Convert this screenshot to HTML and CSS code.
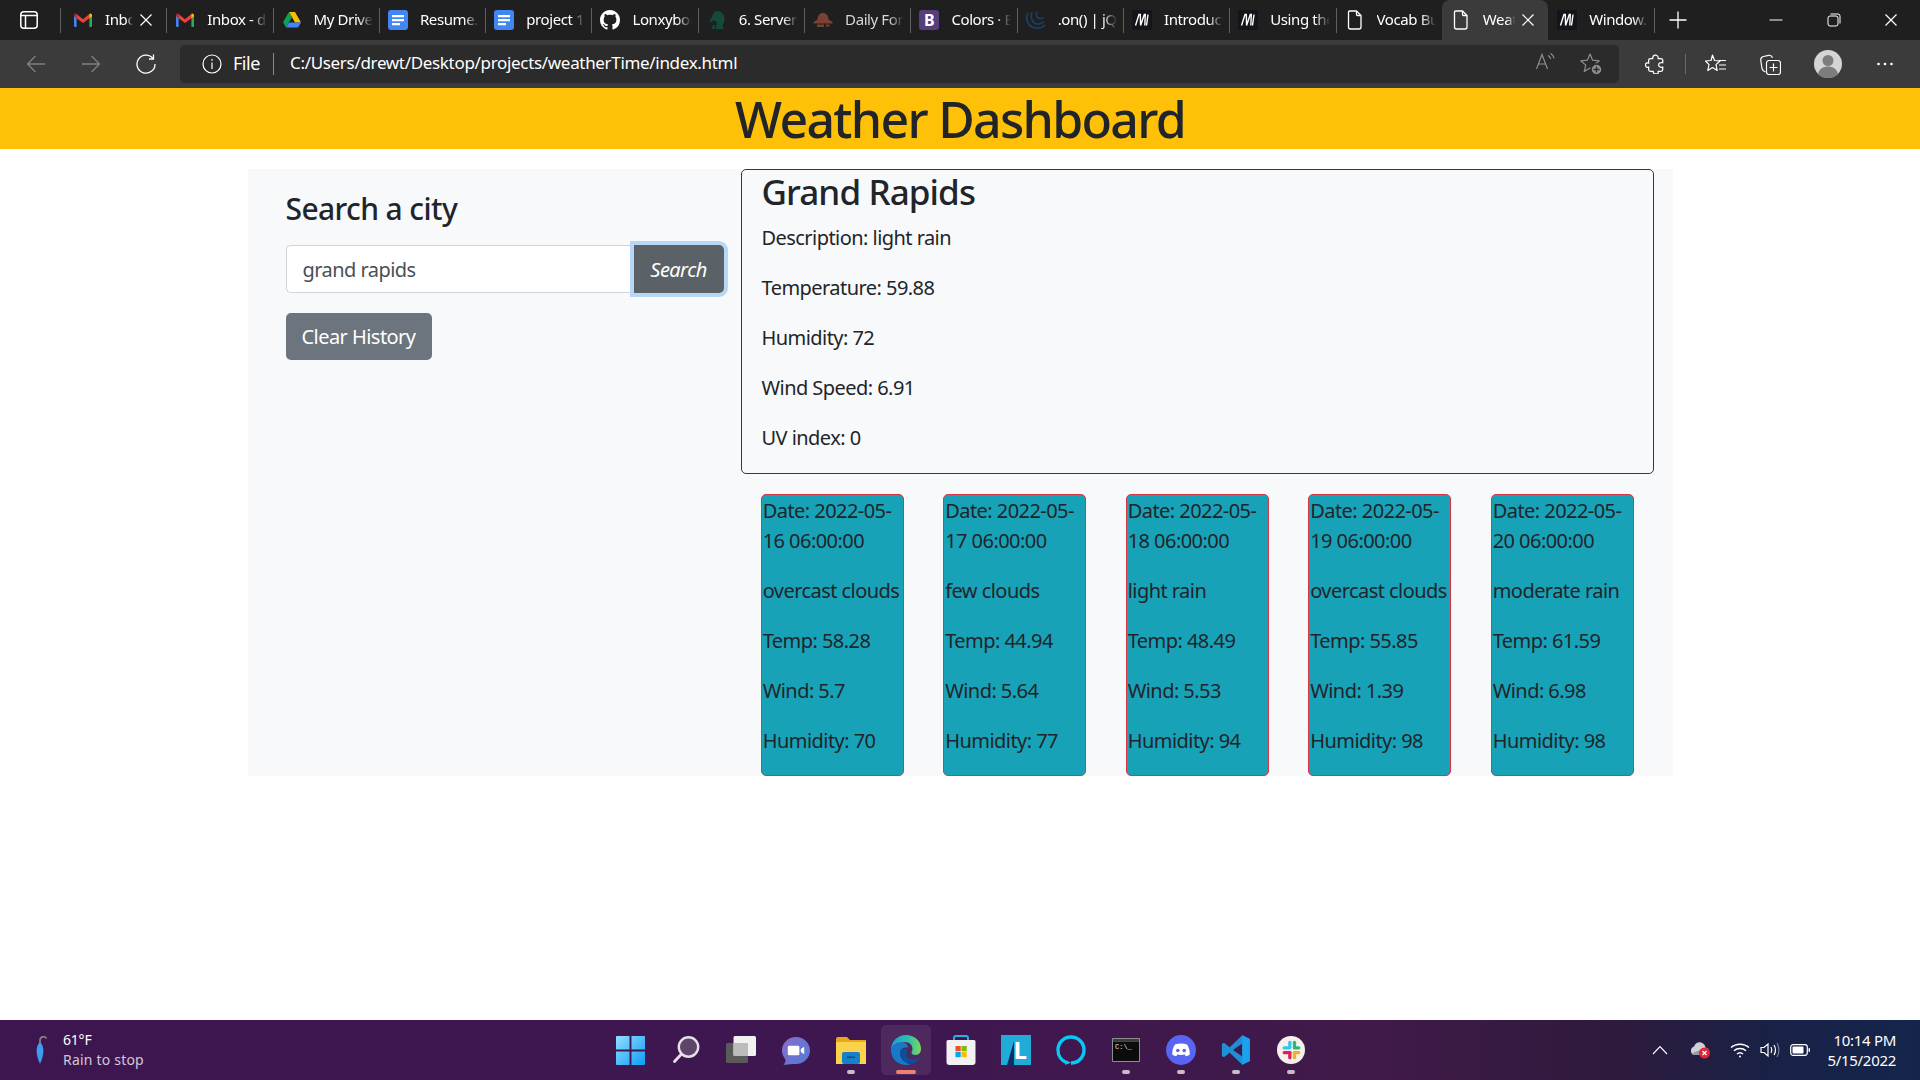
FILE: index.html
```html
<!DOCTYPE html>
<html lang="en">
<head>
<meta charset="utf-8">
<title>Weather Dashboard</title>
<link rel="stylesheet" href="styles.css">
</head>
<body>
<svg class="defs" width="0" height="0" aria-hidden="true">
  <symbol id="i-gmail" viewBox="0 0 20 20">
    <path d="M1 5.500 3.600 4v13H2a1 1 0 0 1-1-1z" fill="#4285f4"/>
    <path d="M19 5.500 16.400 4v13H18a1 1 0 0 0 1-1z" fill="#34a853"/>
    <path d="M3.600 4 10 9.300 16.400 4v4.200L10 13 3.600 8.200z" fill="#ea4335"/>
    <path d="M1 5.500C1 4 2.500 3 3.600 4v4.200L1 6.300z" fill="#c5221f"/>
    <path d="M19 5.500C19 4 17.500 3 16.400 4v4.200L19 6.300z" fill="#fbbc04"/>
  </symbol>
  <symbol id="i-drive" viewBox="0 0 20 20">
    <path d="M7 2h6l6 10.500h-6z" fill="#fbbc04"/>
    <path d="M7 2l3 5.200-6 10.300-3-5.200z" fill="#0f9d58"/>
    <path d="M7 12.500h12l-3 5H4z" fill="#4285f4"/>
  </symbol>
  <symbol id="i-doc" viewBox="0 0 20 20">
    <rect width="20" height="20" rx="3" fill="#4285f4"/>
    <path d="M4 5h12v2.200H4zM4 9h12v2.200H4zM4 13h8v2.200H4z" fill="#fff"/>
  </symbol>
  <symbol id="i-github" viewBox="0 0 16 16">
    <path fill="#fff" d="M8 0C3.580 0 0 3.580 0 8c0 3.540 2.290 6.530 5.470 7.590.4.070.55-.17.55-.38 0-.19-.01-.82-.01-1.490-2.010.37-2.530-.49-2.690-.94-.09-.23-.48-.94-.82-1.130-.28-.15-.68-.52-.01-.53.63-.01 1.080.58 1.230.82.720 1.210 1.870.87 2.330.66.070-.52.280-.87.510-1.070-1.780-.2-3.640-.89-3.640-3.950 0-.87.310-1.590.820-2.150-.08-.2-.36-1.020.080-2.120 0 0 .67-.21 2.200.82.640-.18 1.320-.27 2-.27s1.360.09 2 .27c1.530-1.040 2.200-.82 2.200-.82.440 1.100.160 1.920.080 2.120.510.56.820 1.270.820 2.150 0 3.070-1.870 3.750-3.650 3.950.29.25.54.73.54 1.480 0 1.070-.01 1.930-.01 2.200 0 .21.15.46.55.38A8.013 8.013 0 0 0 16 8c0-4.420-3.580-8-8-8z"/>
  </symbol>
  <symbol id="i-spartan" viewBox="0 0 20 20">
    <path d="M10 1c4 0 7.500 3 7.500 8 0 3-1 5-2 6.500l1 3.500H8.500L10 12.500 7 10l-3.500 2.500L2.500 10.500 5 7C5.500 4 7 1.500 10 1z" fill="#144a3c"/>
    <path d="M6 15h2l-.5 4H4.500z" fill="#144a3c"/>
  </symbol>
  <symbol id="i-daily" viewBox="0 0 20 20">
    <path d="M10 3c3 0 5.500 2.500 5.500 6.500l4 2.500v1.500H.5V12l4-2.500C4.500 5.500 7 3 10 3z" fill="#7b4233"/>
    <path d="M4 14.500h7v2.500H4zM13 14.500h3.500v2H13z" fill="#7b4233"/>
  </symbol>
  <symbol id="i-boot" viewBox="0 0 20 20">
    <rect width="20" height="20" rx="3" fill="#563d7c"/>
    <text x="10" y="15.800" text-anchor="middle" class="svg-b">B</text>
  </symbol>
  <symbol id="i-jq" viewBox="0 0 20 20" fill="none" stroke="#1c3f63" stroke-width="1.700">
    <path d="M2 3c-3 7 0 14 8 15 4 .4 7-1 9-3"/>
    <path d="M6 2C4 7 6 13 11 14c3 .5 5-.5 7-2.500"/>
    <path d="M11 1.500c-1.500 3.500 0 6.500 2.500 7 2 .3 3.500-.5 4.500-1.500"/>
  </symbol>
  <symbol id="i-mdn" viewBox="0 0 20 20">
    <rect width="20" height="20" fill="#15141a"/>
    <path d="M3.500 15.500 7 4.500h1.300L8.600 15.500M8.600 15.500 12.300 4.500h1L12.800 15.500" stroke="#fff" stroke-width="1.400" fill="none"/>
    <path d="M16 4.500 14.500 15.500" stroke="#fff" stroke-width="1.400" fill="none"/>
  </symbol>
  <symbol id="i-file" viewBox="0 0 20 20" fill="none" stroke="#fff" stroke-width="1.300">
    <path d="M4.500 1h7l4.500 4.500V17a2 2 0 0 1-2 2H5.500a2 2 0 0 1-2-2V2a1 1 0 0 1 1-1z"/>
    <path d="M11.500 1v3.500a1 1 0 0 0 1 1H16"/>
  </symbol>
  <symbol id="i-x" viewBox="0 0 14 14" fill="none" stroke="#fff" stroke-width="1.200">
    <path d="M1.500 1.500l11 11M12.500 1.500l-11 11"/>
  </symbol>
</svg>

<div class="chrome">
  <div class="tabstrip">
    <div class="side-btn">
      <svg width="18" height="18" viewBox="0 0 18 18" fill="none" stroke="#fff" stroke-width="1.500"><rect x=".8" y=".8" width="16.400" height="16.400" rx="3"/><path d="M1 4.500h16M5.500 4.500v12.500"/></svg>
    </div>
    <div class="tabs">
      <div class="tab tab-first"><svg class="fav"><use href="#i-gmail"/></svg><span class="tab-title">Inbox (3)</span><svg class="tab-x"><use href="#i-x"/></svg></div>
      <div class="tab"><svg class="fav"><use href="#i-gmail"/></svg><span class="tab-title">Inbox - drew</span></div>
      <div class="tab"><svg class="fav"><use href="#i-drive"/></svg><span class="tab-title">My Drive - G</span></div>
      <div class="tab"><svg class="fav"><use href="#i-doc"/></svg><span class="tab-title">Resume.doc</span></div>
      <div class="tab"><svg class="fav"><use href="#i-doc"/></svg><span class="tab-title">project 1 pl</span></div>
      <div class="tab"><svg class="fav"><use href="#i-github"/></svg><span class="tab-title">Lonxyboi/w</span></div>
      <div class="tab"><svg class="fav"><use href="#i-spartan"/></svg><span class="tab-title">6. Server-Si</span></div>
      <div class="tab tab-dim"><svg class="fav"><use href="#i-daily"/></svg><span class="tab-title">Daily Forec</span></div>
      <div class="tab"><svg class="fav"><use href="#i-boot"/></svg><span class="tab-title">Colors · Bo</span></div>
      <div class="tab"><svg class="fav"><use href="#i-jq"/></svg><span class="tab-title">.on() | jQue</span></div>
      <div class="tab"><svg class="fav"><use href="#i-mdn"/></svg><span class="tab-title">Introductio</span></div>
      <div class="tab"><svg class="fav"><use href="#i-mdn"/></svg><span class="tab-title">Using the F</span></div>
      <div class="tab"><svg class="fav"><use href="#i-file"/></svg><span class="tab-title">Vocab Buil</span></div>
      <div class="tab tab-active"><svg class="fav"><use href="#i-file"/></svg><span class="tab-title">Weather</span><svg class="tab-x"><use href="#i-x"/></svg></div>
      <div class="tab tab-after"><svg class="fav"><use href="#i-mdn"/></svg><span class="tab-title">Window.loc</span></div>
    </div>
    <div class="tab-end"></div>
    <div class="new-tab"><svg width="18" height="18" viewBox="0 0 18 18" stroke="#fff" stroke-width="1.300"><path d="M9 .5v17M.5 9h17"/></svg></div>
    <div class="win-btns">
      <div class="win-btn"><svg width="14" height="14" viewBox="0 0 14 14" stroke="#fff"><path d="M.5 7h13"/></svg></div>
      <div class="win-btn"><svg width="14" height="14" viewBox="0 0 14 14" fill="none" stroke="#fff"><rect x="1" y="3" width="10" height="10" rx="2"/><path d="M3.500 1h7.500A2 2 0 0 1 13 3v7.500"/></svg></div>
      <div class="win-btn"><svg width="14" height="14"><use href="#i-x"/></svg></div>
    </div>
  </div>

  <div class="toolbar">
    <div class="nav-btn"><svg width="20" height="20" viewBox="0 0 20 20" fill="none" stroke="#808080" stroke-width="1.300"><path d="M19 10H1.500M9.500 2 1.500 10l8 8"/></svg></div>
    <div class="nav-btn"><svg width="20" height="20" viewBox="0 0 20 20" fill="none" stroke="#808080" stroke-width="1.300"><path d="M1 10h17.500M10.500 2l8 8-8 8"/></svg></div>
    <div class="nav-btn"><svg width="20" height="20" viewBox="0 0 20 20" fill="none" stroke="#fff" stroke-width="1.300"><path d="M17 4.500A9 9 0 1 0 19 10"/><path d="M17.500 .5v4.500H13"/></svg></div>
    <div class="address">
      <svg class="addr-info" width="20" height="20" viewBox="0 0 20 20" fill="none" stroke="#fff" stroke-width="1.200"><circle cx="10" cy="10" r="9"/><path d="M10 8.500V15M10 5v1.700"/></svg>
      <span class="addr-file">File</span>
      <span class="addr-sep"></span>
      <span class="addr-url">C:/Users/drewt/Desktop/projects/weatherTime/index.html</span>
      <div class="addr-right">
        <div class="addr-btn"><svg width="20" height="16" viewBox="0 0 20 16" fill="none" stroke="#8f8f8f" stroke-width="1.200"><path d="M.5 16 6 1.500 11.500 16M2.500 11h7"/><path d="M12 2.500c1.600.8 2.400 2 2.700 3.500M14.500 .4c2 1 3.200 2.800 3.500 5"/></svg></div>
        <div class="addr-btn"><svg width="22" height="22" viewBox="0 0 22 22" fill="none" stroke="#8f8f8f" stroke-width="1.200" stroke-linejoin="round"><path d="M10 1l2.600 6.200 6.700.6-5.100 4.300 1.600 6.500-5.800-3.500-5.800 3.500 1.600-6.500L.7 7.800l6.700-.6z"/><circle cx="16.500" cy="16.500" r="5.500" fill="#8f8f8f" stroke="#2b2b2b" stroke-width="1.500"/><path d="M16.500 13.500v6M13.500 16.500h6" stroke="#2b2b2b" stroke-width="1.300"/></svg></div>
      </div>
    </div>
    <div class="tb-right">
      <div class="tb-btn"><svg width="20" height="20" viewBox="0 0 22 22" fill="none" stroke="#fff" stroke-width="1.400"><path d="M8.500 4a3 3 0 0 1 5.500-1.500c.8 1 .5 2 .5 2.500h3a2 2 0 0 1 2 2v2.500c-3-.5-4.500 1-4.500 2.500s1.500 3 4.500 2.500V17a2 2 0 0 1-2 2h-3c.5 3-1 3-2.500 3s-3.500-1-3-3H6a2 2 0 0 1-2-2v-2.500c-2 .5-3.500-.5-3.500-2.500S2 9.500 4 10V7a2 2 0 0 1 2-2h2.500z"/></svg></div>
      <span class="tb-sep"></span>
      <div class="tb-btn"><svg width="21" height="20" viewBox="0 0 21 20" fill="none" stroke="#fff" stroke-width="1.200" stroke-linejoin="round"><path d="M7.500 1l2 5.500 5.500.5-4 3.600 1.200 5.900-4.700-3-4.700 3L4 10.600 0.500 7l5.500-.5z"/><path d="M13.500 6.500H21M14 11h7M14 15h7"/></svg></div>
      <div class="tb-btn tb-coll"><svg width="21" height="21" viewBox="0 0 21 21" fill="none" stroke="#fff" stroke-width="1.200"><path d="M5.500 18C3.500 17.500 2.500 16.500 2 14.500L.8 6.500C.5 4.500 1.500 3 3.500 2.500L8.500 1.300c2-.3 3.300.6 4 2.500"/><rect x="6.500" y="6.500" width="14" height="14" rx="2.500"/><path d="M13.500 9.500v8M9.500 13.500h8"/></svg></div>
      <div class="tb-btn tb-prof"><svg width="28" height="28" viewBox="0 0 28 28"><circle cx="14" cy="14" r="14" fill="#d5d5d5"/><circle cx="14" cy="10.500" r="5.500" fill="#7d7d7d"/><path d="M4 24c1-5 5-7.500 10-7.500S23 19 24 24a14 14 0 0 1-20 0z" fill="#7d7d7d"/></svg></div>
      <div class="tb-btn tb-more"><svg width="18" height="4" viewBox="0 0 18 4" fill="#fff"><circle cx="2.500" cy="2" r="1.300"/><circle cx="9" cy="2" r="1.300"/><circle cx="15.500" cy="2" r="1.300"/></svg></div>
    </div>
  </div>
</div>

<div class="page">
  <header class="hero"><h1>Weather Dashboard</h1></header>
  <main class="container">
    <aside class="search-col">
      <h4 class="search-title">Search a city</h4>
      <div class="input-group">
        <div class="city-input">grand rapids</div>
        <button class="btn-search" type="button">Search</button>
      </div>
      <button class="btn-clear" type="button">Clear History</button>
    </aside>
    <section class="results">
      <div class="current">
        <h3>Grand Rapids</h3>
        <p>Description: light rain</p>
        <p>Temperature: 59.88</p>
        <p>Humidity: 72</p>
        <p>Wind Speed: 6.91</p>
        <p>UV index: 0</p>
      </div>
      <div class="forecast">
        <article class="day"><p>Date: 2022-05-16 06:00:00</p><p>overcast clouds</p><p>Temp: 58.28</p><p>Wind: 5.7</p><p>Humidity: 70</p></article>
        <article class="day"><p>Date: 2022-05-17 06:00:00</p><p>few clouds</p><p>Temp: 44.94</p><p>Wind: 5.64</p><p>Humidity: 77</p></article>
        <article class="day"><p>Date: 2022-05-18 06:00:00</p><p>light rain</p><p>Temp: 48.49</p><p>Wind: 5.53</p><p>Humidity: 94</p></article>
        <article class="day"><p>Date: 2022-05-19 06:00:00</p><p>overcast clouds</p><p>Temp: 55.85</p><p>Wind: 1.39</p><p>Humidity: 98</p></article>
        <article class="day"><p>Date: 2022-05-20 06:00:00</p><p>moderate rain</p><p>Temp: 61.59</p><p>Wind: 6.98</p><p>Humidity: 98</p></article>
      </div>
    </section>
  </main>
</div>

<footer class="taskbar">
  <div class="weather">
    <svg class="umbrella" width="14" height="28" viewBox="0 0 14 28"><path d="M6 7V4a3.500 3.500 0 0 1 6.500 -1.500" fill="none" stroke="#8b8088" stroke-width="1.700"/><path d="M6 6c4.500 4 4.500 12 0 22C1.500 18 1.500 10 6 6z" fill="#3f9bf0"/></svg>
    <div class="weather-text"><span class="w-temp">61°F</span><span class="w-desc">Rain to stop</span></div>
  </div>
  <div class="apps">
    <div class="app"><svg width="29" height="29" viewBox="0 0 30 30"><defs><linearGradient id="g-win" x1="0" y1="0" x2="1" y2="1"><stop offset="0" stop-color="#8fe0ff"/><stop offset="1" stop-color="#0f9cf5"/></linearGradient></defs><path d="M0 1a1 1 0 0 1 1-1h13v14H0zM16 0h13a1 1 0 0 1 1 1v13H16zM0 16h14v14H1a1 1 0 0 1-1-1zM16 16h14v13a1 1 0 0 1-1 1H16z" fill="url(#g-win)"/></svg></div>
    <div class="app"><svg width="28" height="28" viewBox="0 0 28 28" fill="none"><circle cx="16.500" cy="11" r="9.700" fill="#5d4468" stroke="#e6e1e8" stroke-width="2.400"/><path d="M9.500 18 2.500 25.500" stroke="#e6e1e8" stroke-width="2.800" stroke-linecap="round"/></svg></div>
    <div class="app"><svg width="30" height="28" viewBox="0 0 30 28"><rect y="7" width="22" height="20" rx="1.500" fill="#5a5a5a"/><rect x="7.500" width="22.500" height="20" rx="1.500" fill="#f1f1f1"/><rect x="7.500" y="7" width="14.500" height="13" rx="1" fill="#bcbcbc"/></svg></div>
    <div class="app"><svg width="29" height="29" viewBox="0 0 30 30"><defs><linearGradient id="g-chat" x1="0" y1="0" x2="1" y2="1"><stop offset="0" stop-color="#8a6fc8"/><stop offset="1" stop-color="#4f79d8"/></linearGradient></defs><path d="M15.500 1C23.500 1 30 7.300 30 15s-6.500 14-14.500 14c-3 0-7 .3-13 1 2-2.500 2.500-4.500 2-6C2.500 21.500 1 18.500 1 15 1 7.300 7.500 1 15.500 1z" fill="url(#g-chat)"/><rect x="7" y="10" width="12" height="10" rx="1.500" fill="#fff"/><path d="M20.500 13.500 24 11v8l-3.500-2.500z" fill="#fff"/></svg></div>
    <div class="app"><svg width="30" height="27" viewBox="0 0 30 27"><path d="M0 2a2 2 0 0 1 2-2h9l3 3h16v5H0z" fill="#e8a81c"/><path d="M0 5h30v22H0z" fill="#fbd24c"/><rect x="6" y="15" width="18" height="12" rx="2" fill="#1680c9"/><rect x="11" y="19.500" width="8" height="1.500" fill="#0c4d80"/></svg><span class="app-dot"></span></div>
    <div class="app app-active"><svg width="30" height="30" viewBox="0 0 30 30"><defs><linearGradient id="g-edge" x1="0" y1="0" x2="1" y2="0"><stop offset="0" stop-color="#1a9fd8"/><stop offset=".6" stop-color="#2fc0a8"/><stop offset="1" stop-color="#7fd857"/></linearGradient></defs><path d="M15 0c8 0 15 5.500 15 14 0 3-2 6-5.500 6-2.500 0-4-1-4-2.500 0-1 1-1.500 1-3.500 0-4-3-7-7.500-7C8 7 3 10 0 15 0 7 6 0 15 0z" fill="url(#g-edge)"/><path d="M0 15c0-5 6-8 10.500-8 4 0 6.500 3 6.500 6-4-1.500-8 1-8 5.500 0 5 4.500 9.500 11 11-1.500.3-3 .5-4.500.5C7 30 0 24 0 15z" fill="#1a78c8"/><path d="M9 18.500c0 6 6 10.500 13 10 3-1 5.500-3 7-6-3 2-7 2.500-10 1.500-4-1.500-4-5-2.500-9.500C13 13 9 15 9 18.500z" fill="#0b4f9e"/></svg><span class="app-bar"></span></div>
    <div class="app"><svg width="30" height="31" viewBox="0 0 30 31"><path d="M8 7V3a2 2 0 0 1 2-2h10a2 2 0 0 1 2 2v4" fill="none" stroke="#27b0e8" stroke-width="2"/><path d="M2 5h26a1.500 1.500 0 0 1 1.500 1.500V27a3 3 0 0 1-3 3h-23a3 3 0 0 1-3-3V6.500A1.500 1.500 0 0 1 2 5z" fill="#f2f2f2"/><rect x="9.500" y="11" width="5.200" height="5.200" fill="#f25022"/><rect x="15.500" y="11" width="5.200" height="5.200" fill="#7fba00"/><rect x="9.500" y="17" width="5.200" height="5.200" fill="#00a4ef"/><rect x="15.500" y="17" width="5.200" height="5.200" fill="#ffb900"/></svg></div>
    <div class="app"><svg width="30" height="30" viewBox="0 0 30 30"><rect width="30" height="30" fill="#21acd8"/><path d="M6 30 13 6v24z" fill="#0a2f6b"/><text x="19" y="24" text-anchor="middle" class="svg-l">L</text></svg></div>
    <div class="app"><svg width="30" height="30" viewBox="0 0 30 30" fill="none"><path d="M10.500 27.500C5.500 25.700 2 20.800 2 15 2 7.800 7.800 2 15 2s13 5.800 13 13-5.800 13-13 13" stroke="#08c8f5" stroke-width="3.400"/><path d="M9 30l1.800-4.500 4.200 2.200z" fill="#08c8f5"/></svg></div>
    <div class="app"><svg width="28" height="24" viewBox="0 0 28 24"><rect width="28" height="24" rx="1" fill="#8e8e8e"/><rect x="1" y="3.500" width="26" height="19.500" fill="#0c0c0c"/><rect x="1" y="1" width="26" height="2.500" fill="#3c3c3c"/><text x="3" y="11" class="svg-cmd">C:\_</text></svg><span class="app-dot"></span></div>
    <div class="app"><svg width="30" height="30" viewBox="0 0 30 30"><circle cx="15" cy="15" r="15" fill="#5865f2"/><path d="M9 9.500c4-1.500 8-1.500 12 0 2 3 3 6 2.800 10-1.500 1-2.800 1.500-4 1.800l-1-1.800c-2.500.6-5 .6-7.500 0l-1 1.800c-1.200-.3-2.500-.8-4-1.800C6 15.500 7 12.500 9 9.500z" fill="#fff"/><circle cx="11.800" cy="15.500" r="1.800" fill="#5865f2"/><circle cx="18.200" cy="15.500" r="1.800" fill="#5865f2"/></svg><span class="app-dot"></span></div>
    <div class="app"><svg width="30" height="30" viewBox="0 0 100 100"><path d="M71 1 96 13v74L71 99 29 59 10 74l-7-4V30l7-4 19 15zM71 28 40 50l31 22z" fill="#1f8fd6" fill-rule="evenodd"/><path d="M71 1 96 13v74L71 99z" fill="#1ba1ee"/></svg><span class="app-dot"></span></div>
    <div class="app"><svg width="28" height="28" viewBox="0 0 30 30"><circle cx="15" cy="15" r="15" fill="#f4f1ec"/><rect x="12" y="5" width="3.500" height="9" rx="1.700" fill="#36c5f0"/><rect x="6" y="11" width="9" height="3.500" rx="1.700" fill="#36c5f0"/><rect x="17" y="5" width="3.500" height="9" rx="1.700" fill="#2eb67d"/><rect x="17" y="11" width="8" height="3.500" rx="1.700" fill="#2eb67d"/><rect x="17" y="16" width="8" height="3.500" rx="1.700" fill="#ecb22e"/><rect x="17" y="16" width="3.500" height="9" rx="1.700" fill="#ecb22e"/><rect x="6" y="16" width="9.500" height="3.500" rx="1.700" fill="#e01e5a"/><rect x="12" y="16" width="3.500" height="9" rx="1.700" fill="#e01e5a"/></svg><span class="app-dot"></span></div>
  </div>
  <div class="tray">
    <div class="tray-cell tray-chev"><svg width="16" height="10" viewBox="0 0 16 10" fill="none" stroke="#fff" stroke-width="1.100"><path d="M1 9l7-7.500L15 9"/></svg></div>
    <div class="tray-cell tray-cloud"><svg width="22" height="18" viewBox="0 0 22 18"><path d="M5 14a4.500 4.500 0 0 1 0-8.500C6.500 2 9 .8 12 1.500c2.500.6 4 2.500 4.500 5 2 .2 3.500 1.800 3.500 3.500v4z" fill="#d0d0d4"/><path d="M3 13c3-3 8-4 14-4l2 5H5z" fill="#9a9aa3"/><circle cx="15.500" cy="12" r="5.500" fill="#e0243a"/><path d="M13.500 10l4 4M17.500 10l-4 4" stroke="#fff" stroke-width="1.300"/></svg></div>
    <div class="tray-cell tray-wifi"><svg width="20" height="16" viewBox="0 0 20 16" fill="none" stroke="#fff" stroke-width="1.500"><path d="M1 5.500c5-4.500 13-4.500 18 0M4 8.800c3.300-3 8.700-3 12 0M7 12c1.700-1.500 4.300-1.500 6 0"/><circle cx="10" cy="14.500" r="1" fill="#fff" stroke="none"/></svg></div>
    <div class="tray-cell"><svg width="20" height="16" viewBox="0 0 20 16" fill="none" stroke="#fff" stroke-width="1.200"><path d="M1 5.500h3L8 2v12L4 10.500H1z"/><path d="M11 5c1 1.800 1 4.200 0 6M14 3c1.800 3 1.800 7 0 10"/><path d="M17 1c2.500 4 2.500 10 0 14" stroke="#7a7a90"/></svg></div>
    <div class="tray-cell"><svg width="20" height="12" viewBox="0 0 20 12"><rect x=".7" y=".7" width="16.600" height="10.600" rx="2.500" fill="none" stroke="#fff" stroke-width="1.200"/><rect x="2.500" y="2.500" width="11" height="7" rx="1" fill="#fff"/><rect x="18.500" y="4" width="1.500" height="4" rx=".7" fill="#fff"/></svg></div>
    <div class="clock"><span>10:14 PM</span><span>5/15/2022</span></div>
  </div>
</footer>
</body>
</html>
```

FILE: styles.css
```css
* { box-sizing: border-box; }

html, body { height: 100%; }

body {
  margin: 0;
  display: flex;
  flex-direction: column;
  overflow: hidden;
  background: #fff;
  color: #212529;
  font-family: "Noto Sans", "Open Sans", sans-serif;
  font-size: 20px;
  line-height: 30px;
  letter-spacing: -0.55px;
}

.defs { position: absolute; }
.svg-b { font: 700 16px "Noto Sans", sans-serif; fill: #fff; }
.svg-l { font: 700 24px "Noto Sans", sans-serif; fill: #fff; }
.svg-cmd { font: 400 7px "Liberation Mono", monospace; fill: #e6e6e6; letter-spacing: 0; }

/* Browser chrome */
.chrome { flex: none; height: 88px; background: #3b3b3b; color: #fff; }

.tabstrip { display: flex; height: 40px; background: #1f1f1f; font-size: 15px; line-height: 20px; letter-spacing: -0.4px; }
.side-btn { flex: none; width: 60px; display: flex; align-items: center; padding-left: 20px; }
.tabs { display: flex; flex: none; }

.tab {
  position: relative;
  flex: none;
  width: 106.300px;
  height: 40px;
  display: flex;
  align-items: center;
  padding: 0 6px 0 9px;
  overflow: hidden;
}
.tab::before {
  content: "";
  position: absolute;
  left: 0;
  top: 8px;
  bottom: 7px;
  width: 1px;
  background: #5f5f5f;
}
.tab-active::before, .tab-after::before { display: none; }
.tab-first { padding-left: 13px; }
.tab-active { background: #3b3b3b; border-radius: 8px 8px 0 0; }
.tab-dim { color: #d6d6d6; }

.fav { flex: none; width: 20px; height: 20px; margin-right: 12px; }
.tab-title {
  flex: 1;
  min-width: 0;
  padding-bottom: 2px;
  white-space: nowrap;
  overflow: hidden;
  -webkit-mask-image: linear-gradient(to right, #000 75%, transparent 100%);
  mask-image: linear-gradient(to right, #000 75%, transparent 100%);
}
.tab-x { flex: none; width: 14px; height: 14px; margin: 0 7px 0 6px; }
.tab-end { flex: none; width: 1px; height: 25px; margin-top: 8px; background: #5f5f5f; }

.new-tab { flex: none; width: 45px; display: flex; align-items: center; justify-content: center; }
.win-btns { display: flex; margin-left: auto; }
.win-btn { width: 57.500px; display: flex; align-items: center; justify-content: center; }

.toolbar { display: flex; align-items: center; height: 48px; padding: 5px 0 5px 8px; }
.nav-btn { flex: none; width: 55px; display: flex; align-items: center; justify-content: center; }

.address {
  flex: none;
  width: 1439px;
  height: 38px;
  margin-left: 7px;
  display: flex;
  align-items: center;
  padding-left: 22px;
  background: #2b2b2b;
  border-radius: 5px;
  font-size: 18px;
  line-height: 24px;
  letter-spacing: -0.5px;
}
.addr-info { flex: none; margin-right: 11px; }
.addr-file { flex: none; width: 40px; padding-bottom: 2px; }
.addr-sep { flex: none; width: 1px; height: 22px; background: #8a8a8a; margin-right: 16px; }
.addr-url { white-space: nowrap; font-size: 17px; letter-spacing: -0.320px; padding-bottom: 2px; }
.addr-right { display: flex; margin-left: auto; padding-right: 6px; }
.addr-btn { width: 45px; display: flex; justify-content: center; }

.tb-right { display: flex; align-items: center; margin-left: 11px; }
.tb-btn { flex: none; width: 50px; display: flex; align-items: center; justify-content: center; }
.tb-sep { flex: none; width: 1px; height: 20px; margin: 0 4.500px; background: #6a6a6a; }
.tb-coll { margin-left: 5px; }
.tb-prof { margin-left: 8px; }
.tb-more { margin-left: 7px; }

/* Page */
.page { flex: 1; min-height: 0; }

.hero { height: 61px; padding-top: 1px; background: #ffc107; text-align: center; }
.hero h1 {
  margin: 0;
  font-size: 50px;
  line-height: 60px;
  font-weight: 500;
  letter-spacing: -1.700px;
}

.container {
  display: flex;
  align-items: flex-start;
  width: 1425px;
  height: 607px;
  margin: 20px auto 0;
  background: #f8f9fa;
}

.search-col { flex: none; width: 493px; padding: 22px 17px 0 38px; }
.search-title { margin: 0 0 18px; font-size: 30px; line-height: 36px; font-weight: 500; letter-spacing: -0.600px; }

.input-group { display: flex; height: 48px; }
.city-input {
  flex: 1;
  padding: 9px 16px 7px;
  background: #fff;
  border: 1px solid #ced4da;
  border-right: 0;
  border-radius: 5px 0 0 5px;
  color: #495057;
}
.btn-search {
  flex: none;
  width: 90px;
  padding: 2px 0 0;
  border: 0;
  border-radius: 0 5px 5px 0;
  background: #5a6268;
  color: #fff;
  font: italic 400 20px/30px "Noto Sans", sans-serif;
  letter-spacing: -0.550px;
  box-shadow: 0 0 0 4px #b8d7f7;
}
.btn-clear {
  display: block;
  width: 146px;
  height: 47px;
  margin-top: 20px;
  padding: 0;
  border: 0;
  border-radius: 5px;
  background: #6c757d;
  color: #fff;
  font: 400 20px/30px "Noto Sans", sans-serif;
  letter-spacing: -0.550px;
}

.results { flex: none; width: 913px; }

.current { height: 305px; padding: 1px 20px 0; border: 1px solid #343a40; border-radius: 5px; }
.current h3 { margin: 0 0 10px; font-size: 35px; line-height: 42px; font-weight: 500; letter-spacing: -0.900px; }
.current p, .day p { margin: 0 0 20px; }

.forecast { display: flex; justify-content: space-between; width: 873px; margin: 20px 0 0 20.200px; }
.day {
  flex: none;
  width: 143px;
  height: 282px;
  padding: 1px 0 0 1px;
  border: 1px solid #dc3545;
  border-radius: 5px;
  background: #17a2b8;
  overflow: hidden;
}

/* Taskbar */
.taskbar {
  flex: none;
  height: 60px;
  display: flex;
  align-items: center;
  background: linear-gradient(90deg, #3d1650 0%, #3f1750 50%, #401a48 72%, #2e1a3c 84%, #1a2146 92%, #14254c 100%);
  color: #fff;
  font-size: 14px;
  line-height: 20px;
  letter-spacing: -0.200px;
}
.weather { flex: none; width: 603px; display: flex; align-items: center; padding-left: 34px; }
.umbrella { margin-right: 15px; }
.weather-text { display: flex; flex-direction: column; }
.w-desc { color: #d3c7d8; letter-spacing: 0.200px; }

.apps { flex: none; display: flex; }
.app { position: relative; flex: none; width: 55px; height: 50px; display: flex; align-items: center; justify-content: center; }
.app-active { width: 50px; margin: 0 2.500px; background: rgba(255, 255, 255, .08); border-radius: 5px; }
.app-dot { position: absolute; left: 24px; bottom: 1px; width: 8px; height: 4px; border-radius: 2px; background: #c8bcc9; }
.app-bar { position: absolute; left: 15px; bottom: 1px; width: 20px; height: 4px; border-radius: 2px; background: #f08070; }

.tray { flex: 1; display: flex; align-items: center; }
.tray-cell { flex: none; width: 30px; display: flex; justify-content: center; }
.tray-chev { width: 40px; margin-left: 322px; }
.tray-cloud { width: 40px; }
.tray-wifi { margin-left: 5px; }
.clock {
  margin-left: auto;
  padding-right: 24px;
  display: flex;
  flex-direction: column;
  align-items: flex-end;
  font-size: 15px;
  line-height: 20px;
  letter-spacing: -0.300px;
}
```
